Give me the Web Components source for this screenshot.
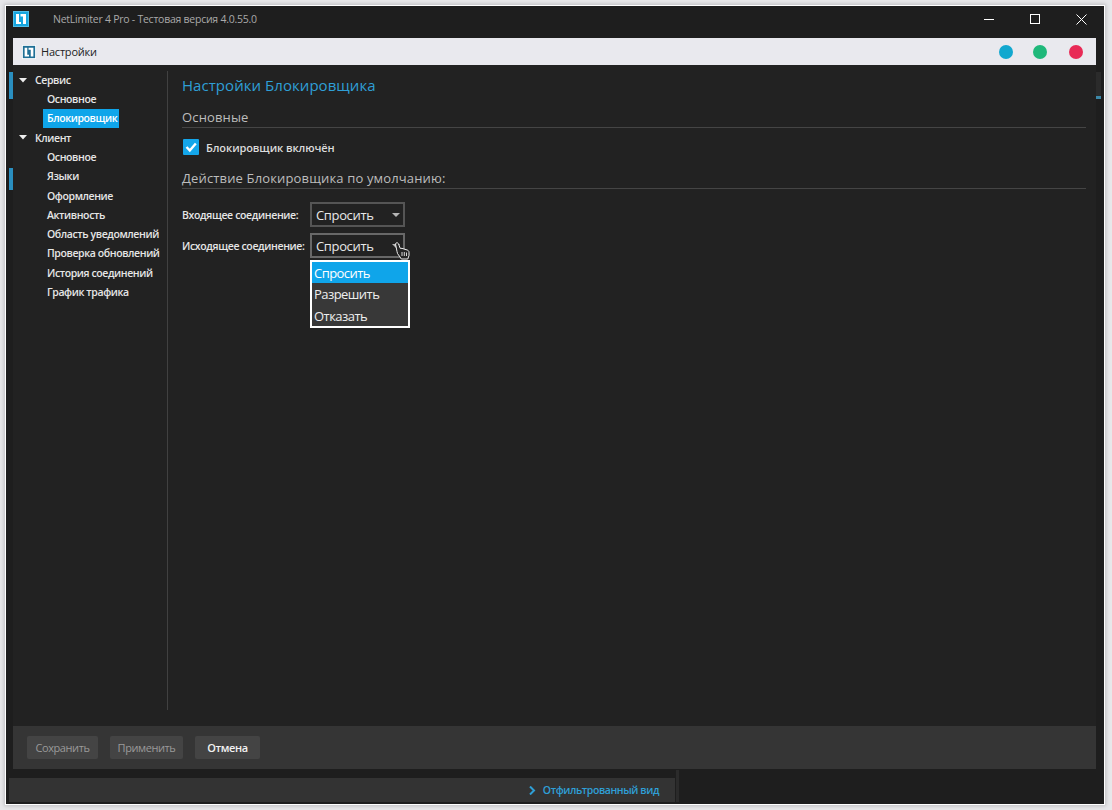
<!DOCTYPE html>
<html><head><meta charset="utf-8"><style>
html,body{margin:0;padding:0;height:100%;background:#e8e8ea;overflow:hidden}
body{font-family:"Open Sans","Liberation Sans",sans-serif;}
</style></head><body>
<nl-window>
  <nl-titlebar slot="title">NetLimiter 4 Pro - Тестовая версия 4.0.55.0</nl-titlebar>
  <nl-dialog-head slot="head">Настройки</nl-dialog-head>
  <nl-tree slot="side"></nl-tree>
  <nl-content slot="main"></nl-content>
  <nl-footer slot="foot"></nl-footer>
  <nl-status slot="status"></nl-status>
</nl-window>
<script>
const def=(name,html,init)=>customElements.define(name,class extends HTMLElement{
  constructor(){super();this.attachShadow({mode:'open'}).innerHTML=html;if(init)init(this)}
});
const logo=(s,bg,fg,edge)=>`<svg width="${s}" height="${s}" viewBox="0 0 16 16"><rect width="16" height="16" fill="${edge||bg}"/><rect x="1" y="1" width="14" height="14" fill="${bg}"/><path d="M3 3H6V11H8V13H3ZM7.500 3H13V13H10V5.500H7.500Z" fill="${fg}"/></svg>`;

def('nl-window',`<style>
:host{display:block;width:1112px;height:810px;box-sizing:border-box;padding:6px 8px 6px 6px}
.w{height:798px;background:#1e1e1e;box-shadow:0 0 0 1px #fff,0 0 4px 2px #bdbdc0;display:flex;flex-direction:column}
.mid{flex:1;display:flex;min-height:0;padding:0 2px 0 7px;margin-right:6px}
.body{flex:1;display:flex;padding-top:6px;min-height:0;box-sizing:border-box;position:relative;background:#222}
.dlg{flex:1;display:flex;flex-direction:column;min-width:0}
.foot{margin-bottom:9px;background:#222}
.marks i{position:absolute;left:-4px;width:4px;background:#2a8fc0}
.bar{position:absolute;right:-5px;top:7px;width:5px;height:24px;background:#2b2b2b;border-bottom:3px solid #3c88a8}
</style><div class="w"><slot name="title"></slot>
<div class="mid"><div class="dlg"><slot name="head"></slot>
<div class="body"><div class="marks"><i style="top:7px;height:27px"></i><i style="top:103px;height:22px"></i></div>
<slot name="side"></slot><slot name="main"></slot><div class="bar"></div></div>
<div class="foot"><slot name="foot"></slot></div></div></div>
<slot name="status"></slot></div>`);

def('nl-titlebar',`<style>
:host{display:flex;align-items:center;height:32px;box-sizing:border-box;padding-bottom:6px;flex:none;color:#a9a9a9;font-size:10.500px;letter-spacing:-.25px}
.l{display:flex;margin:0 24px 0 7px}
.s{flex:1}
.b{width:46px;height:26px;display:flex;align-items:center;justify-content:center}
</style><span class="l">${logo(16,'#16a6e0','#fff','#4fbde8')}</span><span><slot></slot></span><span class="s"></span>
<span class="b"><svg width="11" height="11"><path d="M0 5.500H10" stroke="#fff"/></svg></span>
<span class="b"><svg width="11" height="11"><rect x=".5" y=".5" width="9" height="9" fill="none" stroke="#fff"/></svg></span>
<span class="b"><svg width="11" height="11"><path d="M.5.500L10.500 10.500M10.500.500L.5 10.500" stroke="#fff"/></svg></span>`);

def('nl-dialog-head',`<style>
:host{display:flex;align-items:center;height:27px;background:#e9e9ee;color:#222;font-size:11px;letter-spacing:-.2px;flex:none;padding-left:9px}
.t{margin-left:5px;flex:1}
i{width:14px;height:14px;border-radius:50%;display:block}
</style><span style="display:flex">${logo(14,'#1f6f96','#fff','#fff')}</span><span class="t"><slot></slot></span>
<i style="background:#12a8cf;margin-right:20px"></i><i style="background:#1fb87a;margin-right:22px"></i><i style="background:#e82a56;margin-right:13px"></i>`);

def('nl-tree',`<style>
:host{display:block;width:155px;height:639px;flex:none;border-right:1px solid #414141;font-size:10.500px;letter-spacing:-.4px;color:#e6e6e6;font-weight:600;box-sizing:border-box}
.r{height:19.250px;display:flex;align-items:center;white-space:nowrap}
.g{padding-left:6px}
.g svg{margin-right:8px}
.c{padding-left:34px}
.sel span{background:#0fa5ea;color:#fff;margin-left:-4px;padding:0 3px 0 4px;height:19px;line-height:19px;width:69px}
.box{margin-top:-.5px}
</style><div class="box">
<div class="r g"><svg width="8" height="5"><path d="M0 0H8L4 4.500Z" fill="#eee"/></svg>Сервис</div>
<div class="r c">Основное</div>
<div class="r c sel"><span>Блокировщик</span></div>
<div class="r g"><svg width="8" height="5"><path d="M0 0H8L4 4.500Z" fill="#eee"/></svg>Клиент</div>
<div class="r c">Основное</div><div class="r c">Языки</div><div class="r c">Оформление</div><div class="r c">Активность</div>
<div class="r c">Область уведомлений</div><div class="r c">Проверка обновлений</div><div class="r c">История соединений</div><div class="r c">График трафика</div>
</div>`);

def('nl-section',`<style>
:host{display:block;font-size:13px;color:#bdbdbd;border-bottom:1px solid #454545;line-height:18px;padding-bottom:1px;letter-spacing:.15px}
</style><slot></slot>`);

def('nl-check',`<style>
:host{display:flex;align-items:center;font-size:11px;letter-spacing:-.1px;color:#dcdcdc;font-weight:600}
.b{width:16px;height:16px;background:#14a6ea;border-radius:1px;margin:0 7px 0 1px;display:flex}
</style><span class="b"><svg width="16" height="16"><path d="M3.500 8L6.800 11.500L12.800 4.500" fill="none" stroke="#fff" stroke-width="2.400"/></svg></span><slot></slot>`);

def('nl-combo',`<style>
:host{display:flex;align-items:center;box-sizing:border-box;width:95px;height:25px;border:2px solid #555;color:#e8e8e8;font-size:13px;font-weight:400;letter-spacing:-.35px;padding-left:4px;position:relative;background:#222}
:host([hot]){border-color:#686868}
span{flex:1}
svg{margin-right:3px}
</style><span><slot></slot></span><svg width="8" height="4"><path d="M0 0H8L4 4Z" fill="#b5b5b5"/></svg>`);

def('nl-menu',`<style>
:host{position:absolute;left:128px;top:27px;display:block;width:100px;box-sizing:border-box;border:2px solid #fff;background:#383838;color:#eee;font-size:13px;font-weight:400;letter-spacing:-.55px;padding:0;z-index:3}
div{height:21.300px;line-height:23px;padding-left:2px}
.a{background:#0fa5ea;color:#fff}
</style><div class="a">Спросить</div><div>Разрешить</div><div>Отказать</div>`);

def('nl-content',`<style>
:host{display:block;flex:1;min-width:0;padding:4px 10px 0 14px;box-sizing:border-box;font-size:11px}
h1{margin:0;font-weight:400;font-size:15px;color:#2f9fd6;line-height:20px;height:20px;letter-spacing:.05px}
.sec1{margin-top:13px}
nl-check{margin-top:11px}
.sec2{margin-top:14px}
.row{display:flex;align-items:center;height:25px;font-weight:600;color:#e6e6e6;font-size:10.500px;letter-spacing:-.35px;white-space:nowrap;position:relative}
.form{margin-top:13px;display:flex;flex-direction:column;gap:6px}
.cur{position:absolute;left:212px;top:9px;z-index:4}
</style>
<h1>Настройки Блокировщика</h1>
<nl-section class="sec1">Основные</nl-section>
<nl-check>Блокировщик включён</nl-check>
<nl-section class="sec2">Действие Блокировщика по умолчанию:</nl-section>
<div class="form">
<div class="row"><label style="width:128px">Входящее соединение:</label><nl-combo>Спросить</nl-combo></div>
<div class="row"><label style="width:128px">Исходящее соединение:</label><nl-combo hot>Спросить</nl-combo><nl-menu></nl-menu>
<svg class="cur" width="16" height="18" viewBox="0 0 16 18"><path d="M1.500 1.800C1.800.6 3.800.4 4.400 1.600L6.200 6.300L8 6.400L13.300 8C14.500 8.500 15 9.300 15 10.300V13.500L13.800 17H7.300L6 15L3.500 11.500L3 9.500Z" fill="#252525" stroke="#ececec" stroke-width="1"/><path d="M8 10V14M10.300 10V14M12.500 10.500V14" stroke="#ececec" stroke-width=".9"/></svg>
</div></div>`);

def('nl-footer',`<style>
:host{display:flex;align-items:center;height:43px;background:#353535;padding-left:14px;gap:12px;font-size:11px;letter-spacing:-.42px;font-weight:400;margin-top:16px}
b{font-weight:400;display:flex;align-items:center;justify-content:center;height:23px;background:#444;color:#9a9a9a;border-radius:2px;box-sizing:border-box}
.on{color:#f2f2f2;font-weight:600}
</style><b style="width:71px">Сохранить</b><b style="width:73px">Применить</b><b class="on" style="width:65px">Отмена</b>`);

def('nl-status',`<style>
:host{display:flex;height:26px;flex:none;position:relative}
.l{margin-left:3px;width:666px;height:24px;background:#333;color:#2f9fd6;font-size:10.500px;letter-spacing:-.42px;font-weight:600;display:flex;align-items:center;justify-content:flex-end;padding-right:16px;box-sizing:border-box;gap:7px}
.sep{width:3px;height:32px;margin-top:-8px;background:#2b2b2b;margin-left:1px}
</style><div class="l"><svg width="7" height="9"><path d="M1 .5L5 4.500L1 8.500" fill="none" stroke="#2f9fd6" stroke-width="2"/></svg><span>Отфильтрованный вид</span></div><div class="sep"></div>`);
</script></body></html>
